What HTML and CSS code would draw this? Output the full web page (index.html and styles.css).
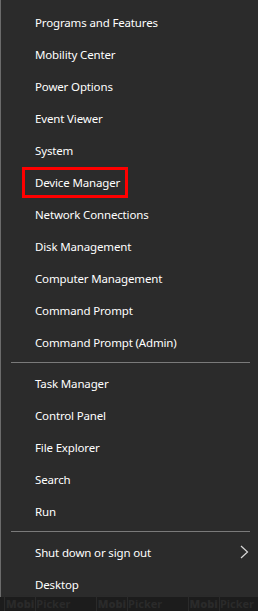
FILE: index.html
```html
<!DOCTYPE html>
<html lang="en">
<head>
  <meta charset="UTF-8">
  <title>Quick Link Menu</title>
  <link rel="stylesheet" href="styles.css">
</head>
<body>
  <div class="menu">
    <ul class="group">
      <li class="item">Programs and Features</li>
      <li class="item">Mobility Center</li>
      <li class="item">Power Options</li>
      <li class="item">Event Viewer</li>
      <li class="item">System</li>
      <li class="item"><span class="highlight">Device Manager</span></li>
      <li class="item">Network Connections</li>
      <li class="item">Disk Management</li>
      <li class="item">Computer Management</li>
      <li class="item">Command Prompt</li>
      <li class="item">Command Prompt (Admin)</li>
    </ul>
    <div class="separator"></div>
    <ul class="group">
      <li class="item">Task Manager</li>
      <li class="item">Control Panel</li>
      <li class="item">File Explorer</li>
      <li class="item">Search</li>
      <li class="item">Run</li>
    </ul>
    <div class="separator"></div>
    <ul class="group">
      <li class="item has-sub">
        Shut down or sign out
        <svg class="chevron" width="9" height="14" viewBox="0 0 9 14">
          <path d="M1 1 L7.5 7 L1 13" fill="none" stroke="#d8d8d8" stroke-width="1.2"/>
        </svg>
      </li>
      <li class="item">Desktop</li>
    </ul>
  </div>
  <div class="taskbar">
    <span class="mark"><b>Mobi</b>Picker</span>
    <span class="mark"><b>Mobi</b>Picker</span>
    <span class="mark"><b>Mobi</b>Picker</span>
  </div>
</body>
</html>
```

FILE: styles.css
```css
body {
  margin: 0;
  width: 258px;
  height: 611px;
  background-color: #2b2b2b;
  font-family: "Noto Sans", "Open Sans", sans-serif;
  font-size: 11.5px;
  letter-spacing: -0.15px;
  color: #ffffff;
  overflow: hidden;
}
.menu {
  height: 597px;
  border-left: 1px solid #6b6b6b;
  box-sizing: border-box;
  padding-top: 6px;
}
.group {
  list-style: none;
  margin: 0;
  padding: 0;
}
.item {
  height: 32px;
  display: flex;
  align-items: center;
  padding-left: 34px;
  padding-right: 9px;
  white-space: nowrap;
}
.has-sub {
  justify-content: space-between;
}
.highlight {
  margin-left: -13px;
  padding: 5px 5px 5px 10px;
  border: 3px solid #ff0000;
}
.separator {
  height: 1px;
  margin: 4px 8px 4px 10px;
  background-color: #7a7a7a;
}
.taskbar {
  height: 14px;
  background-color: #1c1c1c;
  display: flex;
  justify-content: space-between;
  padding: 0 4px;
  font-size: 11px;
  line-height: 14px;
  letter-spacing: 0;
}
.mark {
  color: #2a2a2a;
  font-weight: bold;
}
.mark b {
  border: 1px solid #2a2a2a;
  padding: 0 1px;
}
```
